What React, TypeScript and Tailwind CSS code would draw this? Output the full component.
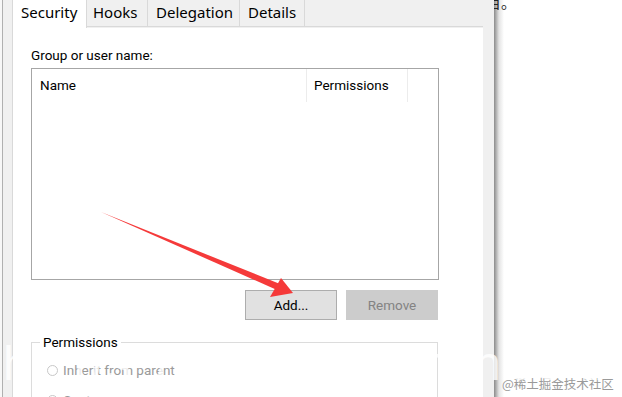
import React from "react";

const font = { fontFamily: '"Noto Sans", "Segoe UI", sans-serif' };
const body = { fontFamily: 'Roboto, "Noto Sans", sans-serif' };

export default function App() {
  return (
    <div
      className="relative flex w-[622px] h-[397px] overflow-hidden bg-white text-[#000] text-[14px]"
      style={font}
    >
      {/* left gutter */}
      <div className="w-[12px] h-full pl-[2px] bg-[#f7f7f7] shrink-0">
        <div className="h-full border-l border-[#b0b0b0] bg-[#f0f0f0]" />
      </div>

      {/* main dialog column */}
      <div className="w-[471px] h-full flex flex-col shrink-0 bg-[#f0f0f0]">
        {/* tabs */}
        <div className="flex h-[28px] items-stretch relative z-10">
          <div className="w-[75px] h-[28px] bg-white border-l border-r border-[#d9d9d9] flex items-center pl-[8px] pb-[3px] text-[15px]">
            Security
          </div>
          <div className="w-[61px] h-[27px] border-r border-b border-[#d9d9d9] flex items-center pl-[6px] pb-[1px] text-[15px]">
            Hooks
          </div>
          <div className="w-[92px] h-[27px] border-r border-b border-[#d9d9d9] flex items-center pl-[8px] pb-[1px] text-[15px]">
            Delegation
          </div>
          <div className="w-[65px] h-[27px] border-r border-b border-[#d9d9d9] flex items-center pl-[8px] pb-[1px] text-[15px]">
            Details
          </div>
          <div className="flex-1 h-[27px] border-b border-[#d9d9d9]" />
        </div>

        {/* panel */}
        <div
          className="flex-1 bg-white border-l border-[#d9d9d9] pl-[18px] pt-[17px] pr-[44px] flex flex-col text-[13.5px]"
          style={body}
        >
          <div className="h-[20px] leading-[20px]">Group or user name:</div>
          <div className="mt-[3px] h-[212px] border border-[#a6a6a6] flex flex-col">
            <div className="flex h-[33px]">
              <div className="w-[275px] pl-[8px] flex items-center border-r border-[#ececec]">Name</div>
              <div className="w-[101px] pl-[7px] flex items-center border-r border-[#ececec]">Permissions</div>
            </div>
          </div>
          <div className="mt-[10px] flex justify-end gap-[9px] pr-[1px]">
            <div className="w-[92px] h-[30px] bg-[#e1e1e1] border border-[#adadad] flex items-center justify-center">
              Add...
            </div>
            <div className="w-[92px] h-[30px] bg-[#cccccc] border border-[#cccccc] flex items-center justify-center text-[#838383]">
              Remove
            </div>
          </div>
          <fieldset className="mt-[13px] mr-[1px] border border-[#dcdcdc] pl-[15px] h-[80px]">
            <legend className="-ml-[7px] px-[3px] leading-[18px]">Permissions</legend>
            <div className="mt-[9px] flex items-center gap-[5px] text-[#9a9a9a]">
              <span className="w-[11px] h-[11px] rounded-full border border-[#c8c8c8]" />
              <span>Inherit from parent</span>
            </div>
            <div className="mt-[10px] flex items-center gap-[5px] text-[#9a9a9a]">
              <span className="w-[11px] h-[11px] rounded-full border border-[#c8c8c8]" />
              <span>Custom</span>
            </div>
          </fieldset>
        </div>
      </div>

      {/* right frame strip */}
      <div className="w-[11px] h-full bg-[#f0f0f0] shrink-0 relative z-20" />

      {/* window edge + shadow */}
      <div className="w-[10px] h-full shrink-0 bg-gradient-to-r from-[#8c8c8c] via-[#e4e4e4] to-white" />

      {/* background document */}
      <div className="flex-1 h-full relative flex flex-col">
        <div
          className="-mt-[8px] -ml-[18px] text-[15px] text-[#222] leading-[20px] relative z-[5]"
          style={{ fontFamily: '"Noto Sans CJK SC", sans-serif' }}
        >
          目。
        </div>
        <div
          className="mt-auto mb-[4px] -ml-[2px] text-[12.5px] text-[#9a9a9a] leading-[18px]"
          style={{ fontFamily: '"Noto Sans CJK SC", sans-serif' }}
        >
          @稀土掘金技术社区
        </div>
      </div>

      {/* watermark */}
      <div
        className="absolute left-[3px] top-[338px] text-[48px] leading-[52px] text-white opacity-80 whitespace-nowrap pointer-events-none tracking-[6px] z-30"
        style={{ fontFamily: '"Liberation Sans", sans-serif' }}
      >
        https://blog.csdn.net/u0128
      </div>

      {/* red arrow annotation */}
      <svg className="absolute left-0 top-0 pointer-events-none z-30" width="622" height="397" viewBox="0 0 622 397">
        <polygon points="101,212 280,284 277,290" fill="#f53a3a" />
        <polygon points="293,293 270,297 281,278" fill="#f53a3a" />
      </svg>
    </div>
  );
}
